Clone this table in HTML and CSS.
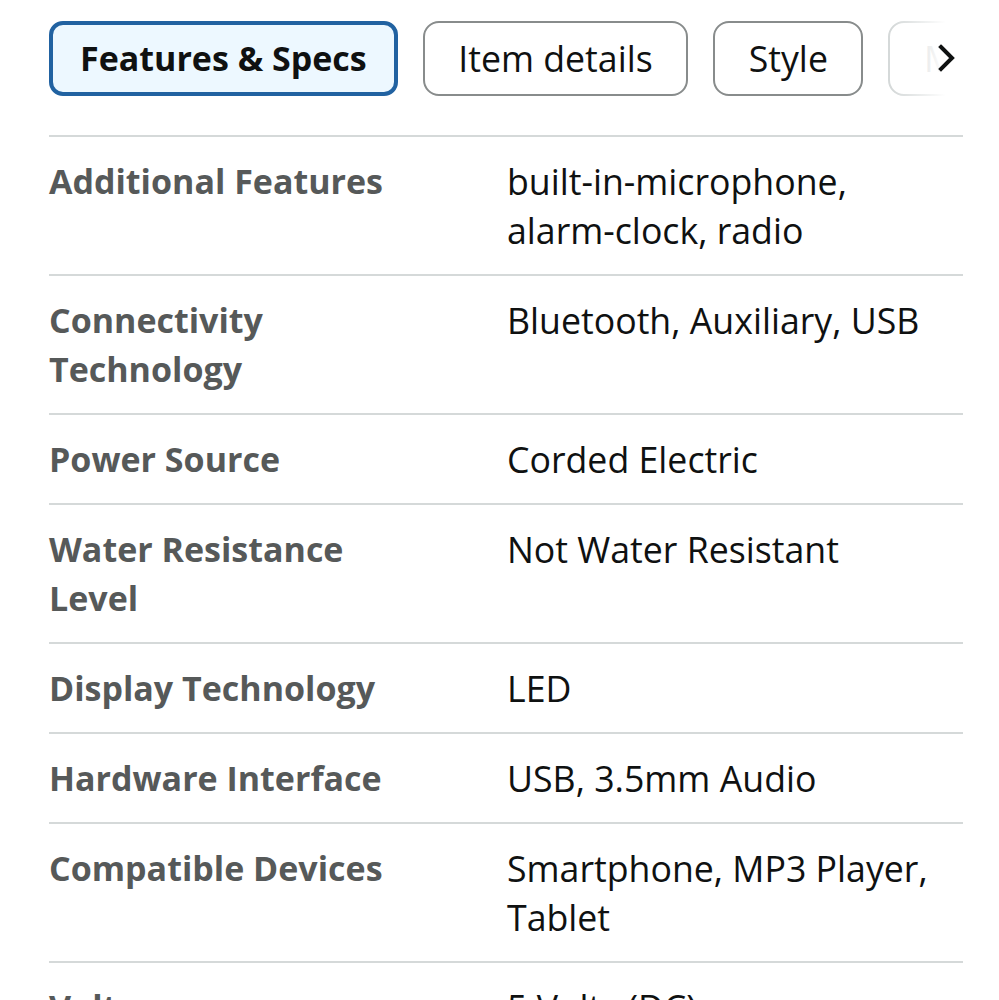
FILE: index.html
```html
<!DOCTYPE html>
<html lang="en">
<head>
<meta charset="utf-8">
<title>Features &amp; Specs</title>
<link rel="stylesheet" href="styles.css">
</head>
<body>
<div class="page">
  <div class="tabs-wrap">
    <div class="tabs">
      <div class="tab active">Features &amp; Specs</div>
      <div class="tab">Item details</div>
      <div class="tab">Style</div>
      <div class="tab faded">Measurements</div>
    </div>
    <div class="fade"></div>
    <div class="chevron">
      <svg width="22" height="30" viewBox="0 0 22 30"><path d="M5 4 L16 15 L5 26" fill="none" stroke="#0f1111" stroke-width="4" stroke-linecap="square"/></svg>
    </div>
  </div>
  <div class="specs">
    <div class="row"><div class="label">Additional Features</div><div class="value">built-in-microphone, <span class="nw">alarm-clock</span>, radio</div></div>
    <div class="row"><div class="label">Connectivity Technology</div><div class="value">Bluetooth, Auxiliary, USB</div></div>
    <div class="row"><div class="label">Power Source</div><div class="value">Corded Electric</div></div>
    <div class="row"><div class="label">Water Resistance Level</div><div class="value">Not Water Resistant</div></div>
    <div class="row"><div class="label">Display Technology</div><div class="value">LED</div></div>
    <div class="row"><div class="label">Hardware Interface</div><div class="value">USB, 3.5mm Audio</div></div>
    <div class="row"><div class="label">Compatible Devices</div><div class="value">Smartphone, MP3 Player, Tablet</div></div>
    <div class="row"><div class="label">Voltage</div><div class="value">5 Volts (DC)</div></div>
  </div>
</div>
</body>
</html>
```
FILE: styles.css
```css
html, body {
  margin: 0;
  padding: 0;
  background: #ffffff;
}
body {
  font-family: "Open Sans", "Noto Sans", sans-serif;
  color: #0f1111;
  overflow: hidden;
  height: 1000px;
}
.page {
  width: 914px;
  margin-left: 49px;
  padding-top: 21px;
}
.tabs-wrap {
  position: relative;
  width: 914px;
  overflow: hidden;
  height: 75px;
}
.tabs {
  display: flex;
  gap: 25px;
  white-space: nowrap;
}
.tab {
  flex: none;
  box-sizing: border-box;
  height: 75px;
  border: 2px solid #888c8c;
  border-radius: 16px;
  padding: 0 33.5px;
  font-size: 35.7px;
  line-height: 70px;
  color: #0f1111;
}
.tab.active {
  border: 4px solid #2162a1;
  background: #edf8ff;
  font-size: 34px;
  font-weight: 700;
  line-height: 67px;
  padding: 0 27px;
  border-radius: 14px;
}
.tab.faded {
  border-color: #d5d9d9;
  color: #c8cccc;
}
.fade {
  position: absolute;
  top: 0;
  right: 0;
  width: 70px;
  height: 75px;
  background: linear-gradient(to right, rgba(255,255,255,0), #ffffff 75%);
}
.chevron {
  position: absolute;
  top: 22px;
  left: 887px;
  width: 22px;
  height: 30px;
}
.specs {
  margin-top: 39px;
}
.row {
  display: grid;
  grid-template-columns: 458px 1fr;
  border-top: 2px solid #d5d9d9;
  padding: 19.5px 0;
  line-height: 49px;
}
.label {
  font-size: 34px;
  font-weight: 700;
  color: #565959;
  max-width: 360px;
}
.value {
  font-size: 35.7px;
  color: #0f1111;
}
.nw {
  white-space: nowrap;
}
```
